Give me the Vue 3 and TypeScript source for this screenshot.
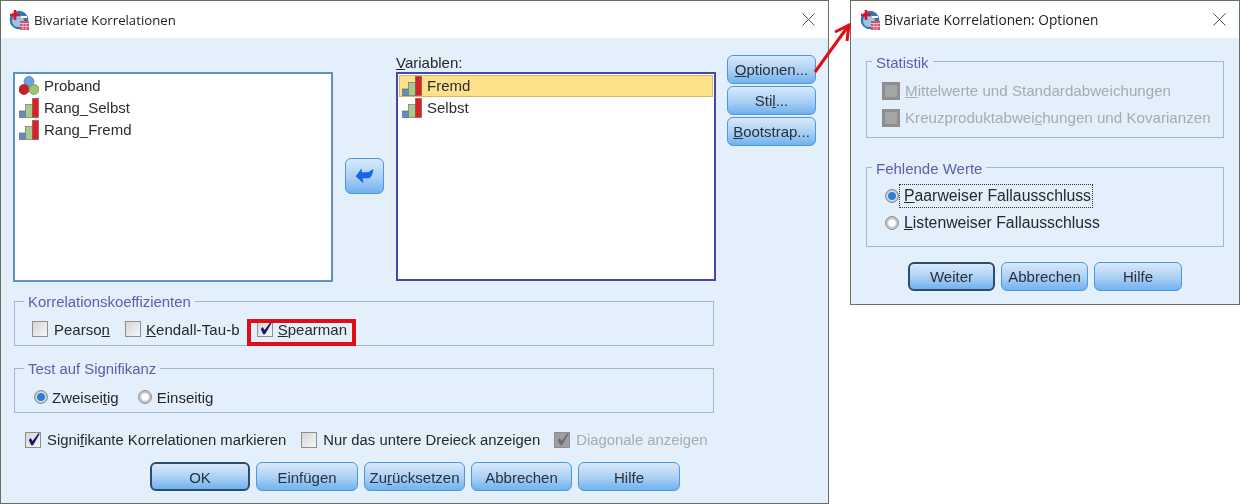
<script setup lang="ts">
interface Variable { name: string; kind: 'nominal' | 'scale'; selected?: boolean }
const sources: Variable[] = [
  { name: 'Proband', kind: 'nominal' },
  { name: 'Rang_Selbst', kind: 'scale' },
  { name: 'Rang_Fremd', kind: 'scale' },
]
const targets: Variable[] = [
  { name: 'Fremd', kind: 'scale', selected: true },
  { name: 'Selbst', kind: 'scale' },
]
</script>

<template>
  <div class="desktop">
    <section class="window main">
      <header class="titlebar">
        <svg class="appicon" viewBox="0 0 20 20"><circle cx="10" cy="10" r="9.300" fill="#2f78b0"/><circle cx="9" cy="11" r="6" fill="#9cc4e2"/><path d="M6 0v10M1 5h10" stroke="#d8142c" stroke-width="2.600" fill="none"/><path d="M12 7h6" stroke="#fff" stroke-width="2"/><rect x="11" y="11" width="9" height="9" fill="#d9506a"/><path d="M11 13.500h9M11 16.500h9M14 13v7M17 13v7" stroke="#f7d5dc" stroke-width=".8"/></svg>
        <span class="title">Bivariate Korrelationen</span>
        <svg class="close" viewBox="0 0 14 14"><path d="M.5.500l13 13M13.500.500l-13 13" stroke="#444" stroke-width="1" fill="none"/></svg>
      </header>
      <div class="body">
        <div class="lists">
          <ul class="list source">
            <li v-for="v in sources" :key="v.name" class="item">
              <svg v-if="v.kind === 'nominal'" class="vicon" viewBox="0 0 20 20"><circle cx="10" cy="5.500" r="5" fill="#6aa3dd" stroke="#4576a8" stroke-width=".7"/><circle cx="5" cy="13.500" r="5" fill="#cc2027" stroke="#8f1a1f" stroke-width=".7"/><circle cx="15" cy="13.500" r="5" fill="#9cc46e" stroke="#6f9248" stroke-width=".7"/></svg>
              <svg v-else class="vicon" viewBox="0 0 20 20"><rect x=".5" y="13" width="6" height="6.500" fill="#5f8fc0" stroke="#56677a" stroke-width=".7"/><rect x="6.500" y="6.500" width="7" height="13" fill="#a9c88a" stroke="#6d7d60" stroke-width=".7"/><rect x="13.500" y=".5" width="6" height="19" fill="#dc1f26" stroke="#7c5a5c" stroke-width=".7"/></svg>
              <span>{{ v.name }}</span>
            </li>
          </ul>
          <button class="btn arrow" type="button" aria-label="Verschieben">
            <svg viewBox="0 0 20 18" width="20" height="18"><path d="M.7 9.300L6.700 1.300v4h6.600L18.300 2c-.3 5-2.300 9-5 9.300H7.700l.6 5z" fill="#1565e8"/></svg>
          </button>
          <div class="target">
            <label class="varlabel"><u>V</u>ariablen:</label>
            <ul class="list chosen">
              <li v-for="v in targets" :key="v.name" class="item" :class="{ selected: v.selected }">
                <svg class="vicon" viewBox="0 0 20 20"><rect x=".5" y="13" width="6" height="6.500" fill="#5f8fc0" stroke="#56677a" stroke-width=".7"/><rect x="6.500" y="6.500" width="7" height="13" fill="#a9c88a" stroke="#6d7d60" stroke-width=".7"/><rect x="13.500" y=".5" width="6" height="19" fill="#dc1f26" stroke="#7c5a5c" stroke-width=".7"/></svg>
                <span>{{ v.name }}</span>
              </li>
            </ul>
          </div>
          <div class="sidebtns">
            <button class="btn side" type="button"><u>O</u>ptionen...</button>
            <button class="btn side" type="button">Sti<u>l</u>...</button>
            <button class="btn side" type="button"><u>B</u>ootstrap...</button>
          </div>
        </div>

        <fieldset class="group coef">
          <legend>Korrelationskoeffizienten</legend>
          <div class="row">
            <div class="opt pearson"><i class="check"></i><span>Pearso<u>n</u></span></div>
            <div class="opt kendall"><i class="check"></i><span><u>K</u>endall-Tau-b</span></div>
            <div class="opt spearman">
              <i class="check"><svg viewBox="0 0 16 16"><path d="M3 8.500l2-2 2 3L13.500 1l1 1-7 12h-2z" fill="#0e1a78"/></svg></i>
              <span><u>S</u>pearman</span>
            </div>
          </div>
        </fieldset>

        <fieldset class="group sig">
          <legend>Test auf Signifikanz</legend>
          <div class="row">
            <div class="opt two"><i class="radio on"></i><span>Zweisei<u>t</u>ig</span></div>
            <div class="opt one"><i class="radio"></i><span>Einseitig</span></div>
          </div>
        </fieldset>

        <div class="flags">
          <div class="opt mark"><i class="check"><svg viewBox="0 0 16 16"><path d="M3 8.500l2-2 2 3L13.500 1l1 1-7 12h-2z" fill="#0e1a78"/></svg></i><span>Signi<u>f</u>ikante Korrelationen markieren</span></div>
          <div class="opt lower"><i class="check"></i><span>Nur das untere Dreieck anzei<u>g</u>en</span></div>
          <div class="opt disabled"><i class="check dis"><svg viewBox="0 0 16 16"><path d="M3 8.500l2-2 2 3L13.500 1l1 1-7 12h-2z" fill="#6e6e78"/></svg></i><span>Diagonale anzeigen</span></div>
        </div>

        <div class="actions">
          <button class="btn default ok" type="button">OK</button>
          <button class="btn w102" type="button">Einfügen</button>
          <button class="btn w101" type="button">Zu<u>r</u>ücksetzen</button>
          <button class="btn w101" type="button">Abbrechen</button>
          <button class="btn w102" type="button">Hilfe</button>
        </div>
      </div>
    </section>

    <section class="window options">
      <header class="titlebar">
        <svg class="appicon" viewBox="0 0 20 20"><circle cx="10" cy="10" r="9.300" fill="#2f78b0"/><circle cx="9" cy="11" r="6" fill="#9cc4e2"/><path d="M6 0v10M1 5h10" stroke="#d8142c" stroke-width="2.600" fill="none"/><path d="M12 7h6" stroke="#fff" stroke-width="2"/><rect x="11" y="11" width="9" height="9" fill="#d9506a"/><path d="M11 13.500h9M11 16.500h9M14 13v7M17 13v7" stroke="#f7d5dc" stroke-width=".8"/></svg>
        <span class="title">Bivariate Korrelationen: Optionen</span>
        <svg class="close" viewBox="0 0 14 14"><path d="M.5.500l13 13M13.500.500l-13 13" stroke="#444" stroke-width="1" fill="none"/></svg>
      </header>
      <div class="body obody">
        <fieldset class="group stat">
          <legend>Statistik</legend>
          <div class="col">
            <div class="opt disabled"><i class="check grey"></i><span><u>M</u>ittelwerte und Standardabweichungen</span></div>
            <div class="opt disabled"><i class="check grey"></i><span>Kreuzproduktabwei<u>c</u>hungen und Kovarianzen</span></div>
          </div>
        </fieldset>
        <fieldset class="group missing">
          <legend>Fehlende Werte</legend>
          <div class="col mcol">
            <div class="opt focused"><i class="radio on"></i><span class="focusbox"><u>P</u>aarweiser Fallausschluss</span></div>
            <div class="opt plain"><i class="radio"></i><span><u>L</u>istenweiser Fallausschluss</span></div>
          </div>
        </fieldset>
        <div class="oactions">
          <button class="btn default" type="button">Weiter</button>
          <button class="btn" type="button">Abbrechen</button>
          <button class="btn wide" type="button">Hilfe</button>
        </div>
      </div>
    </section>

    <div class="callout"></div>
    <svg class="pointer" viewBox="0 0 50 60" width="50" height="60"><path d="M3 54L37 7M23 14l14-7-2 16" stroke="#e00d16" stroke-width="3" fill="none"/></svg>
  </div>
</template>

<style>
html, body { margin: 0; background: #fff; }
</style>

<style scoped>
.desktop { position: relative; width: 1240px; height: 504px; overflow: hidden; background: #fff; font-family: "Liberation Sans", Arial, sans-serif; font-size: 15px; color: #26282c; filter: blur(.3px); }
.window { position: absolute; top: 0; box-sizing: border-box; border: 1px solid #66705f; background: #e3effb; display: flex; flex-direction: column; }
.main { left: 0; width: 829px; height: 504px; }
.options { left: 850px; width: 390px; height: 305px; }
.titlebar { height: 37px; flex: none; background: #fff; display: flex; align-items: center; padding: 0 13px 0 8px; }
.options .titlebar { padding-left: 9px; }
.appicon { width: 20px; height: 20px; flex: none; margin-right: 5px; }
.options .appicon { margin-right: 4px; }
.title { font-family: "Open Sans", sans-serif; font-size: 13.200px; color: #222; flex: 1; }
.options .title { font-size: 13.700px; }
.close { width: 13px; height: 13px; flex: none; }
.body { flex: 1; padding: 0 12px; display: flex; flex-direction: column; }
.lists { display: flex; align-items: flex-start; height: 244px; flex: none; }
.list { list-style: none; margin: 0; padding: 1px; box-sizing: border-box; background: #fff; width: 320px; }
.source { margin-top: 34px; height: 210px; border: 2px solid #5d93c8; }
.chosen { height: 209px; border: 2px solid #4747a8; }
.item { display: flex; align-items: center; gap: 5px; height: 22px; padding-left: 3px; box-sizing: border-box; color: #2b2d31; }
.item span { margin-top: -2px; }
.selected { background: #fde08a; outline: 1px solid #d4b76a; outline-offset: -1px; }
.vicon { width: 20px; height: 20px; flex: none; }
.arrow { width: 39px; height: 36px; margin: 120px 12px 0; padding: 0; }
.arrow svg { display: block; margin: 0 auto; }
.varlabel { display: block; height: 17px; line-height: 14px; padding-top: 1px; box-sizing: border-box; margin-top: 17px; }
.target { width: 320px; }
.sidebtns { display: flex; flex-direction: column; gap: 2px; margin: 17px 0 0 11px; }
.side { width: 89px; height: 29px; padding: 0; }
.btn { box-sizing: border-box; border: 1px solid #4d98dd; border-radius: 6px; background: linear-gradient(#d8e9fb, #a9cff4 55%, #6fb1ef); font: inherit; color: #2a303a; text-align: center; }
.default { border: 2px solid #2c4d6e; }
.group { margin: 0; border: 1px solid #9db8d0; padding: 0; min-width: 0; box-sizing: border-box; }
.group legend { color: #5b60ad; padding: 2px 4px 0; margin-left: 9px; font-size: 14.900px; line-height: 16px; }
.row { display: flex; }
.col { display: flex; flex-direction: column; }
.coef { height: 54px; width: 700px; margin: 10px 0 0 1px; }
.coef .row { padding: 8px 0 0 17px; }
.sig { height: 54px; width: 700px; margin: 13px 0 0 1px; }
.sig .row { padding: 9px 0 0 19px; }
.opt { display: flex; align-items: center; height: 22px; white-space: nowrap; }
.check { width: 16px; height: 16px; box-sizing: border-box; border: 1px solid #8d8f90; background: linear-gradient(135deg, #d5d5d5, #f7f7f7); display: block; flex: none; margin-right: 6px; }
.check svg { display: block; width: 15px; height: 15px; margin: -1px 0 0 0; }
.dis { background: #9d9da3; border-color: #8d8d93; }
.grey { width: 18px; height: 18px; margin: 0 5px 0 -1px; background: #a5a5a5; border: 3px solid #8e8e8e; }
.disabled { color: #a8abaf; }
.radio { width: 14px; height: 14px; border-radius: 50%; box-sizing: border-box; border: 1px solid #8a9094; background: radial-gradient(circle, #fff 0 3px, #b9bcc0 5px, #d9dbdd 7px); display: block; flex: none; margin-right: 4px; }
.radio.on { background: radial-gradient(circle, #2a7fd4 0 3.500px, #d4dee8 4.500px, #9aa4ae 7px); }
.pearson { margin-right: 15px; }
.kendall { margin-right: 17px; }
.kendall .check { margin-right: 5px; }
.kendall span { letter-spacing: .1px; }
.spearman .check { margin-right: 5px; }
.two { margin-right: 19px; }
.one .radio { margin-right: 5px; }
.callout { position: absolute; left: 247px; top: 319px; width: 109px; height: 27px; box-sizing: border-box; border: 4px solid #e00d16; }
.flags { display: flex; height: 22px; margin: 16px 0 0 12px; flex: none; font-size: 14.850px; }
.mark { margin-right: 15px; }
.lower { margin-right: 14px; }
.actions { display: flex; gap: 6px; margin: 11px 0 0 137px; flex: none; }
.actions .btn { height: 29px; padding: 2px 0 0; }
.ok { width: 100px; }
.w102 { width: 102px; }
.w101 { width: 101px; }
.obody { padding: 0 15px; }
.options .group legend { margin-left: 5px; padding-top: 4px; font-size: 15px; }
.stat { width: 358px; height: 87px; margin-top: 13px; font-size: 15.150px; }
.stat .col { padding: 6px 0 0 16px; }
.stat .opt { height: 27px; }
.missing { width: 358px; height: 90px; margin-top: 19px; font-size: 15.800px; }
.mcol { padding: 5px 0 0 18px; }
.missing .opt { height: 27px; }
.focused .radio { margin-right: 0; }
.focusbox { border: 1px dotted #333; padding: 3px 1px 3px 4px; line-height: 16px; }
.plain span { padding-left: 1px; }
.oactions { display: flex; gap: 6px; margin: 15px 0 0 42px; }
.oactions .btn { width: 87px; height: 29px; padding: 0; }
.oactions .wide { width: 88px; }
.pointer { position: absolute; left: 812px; top: 18px; }
</style>
